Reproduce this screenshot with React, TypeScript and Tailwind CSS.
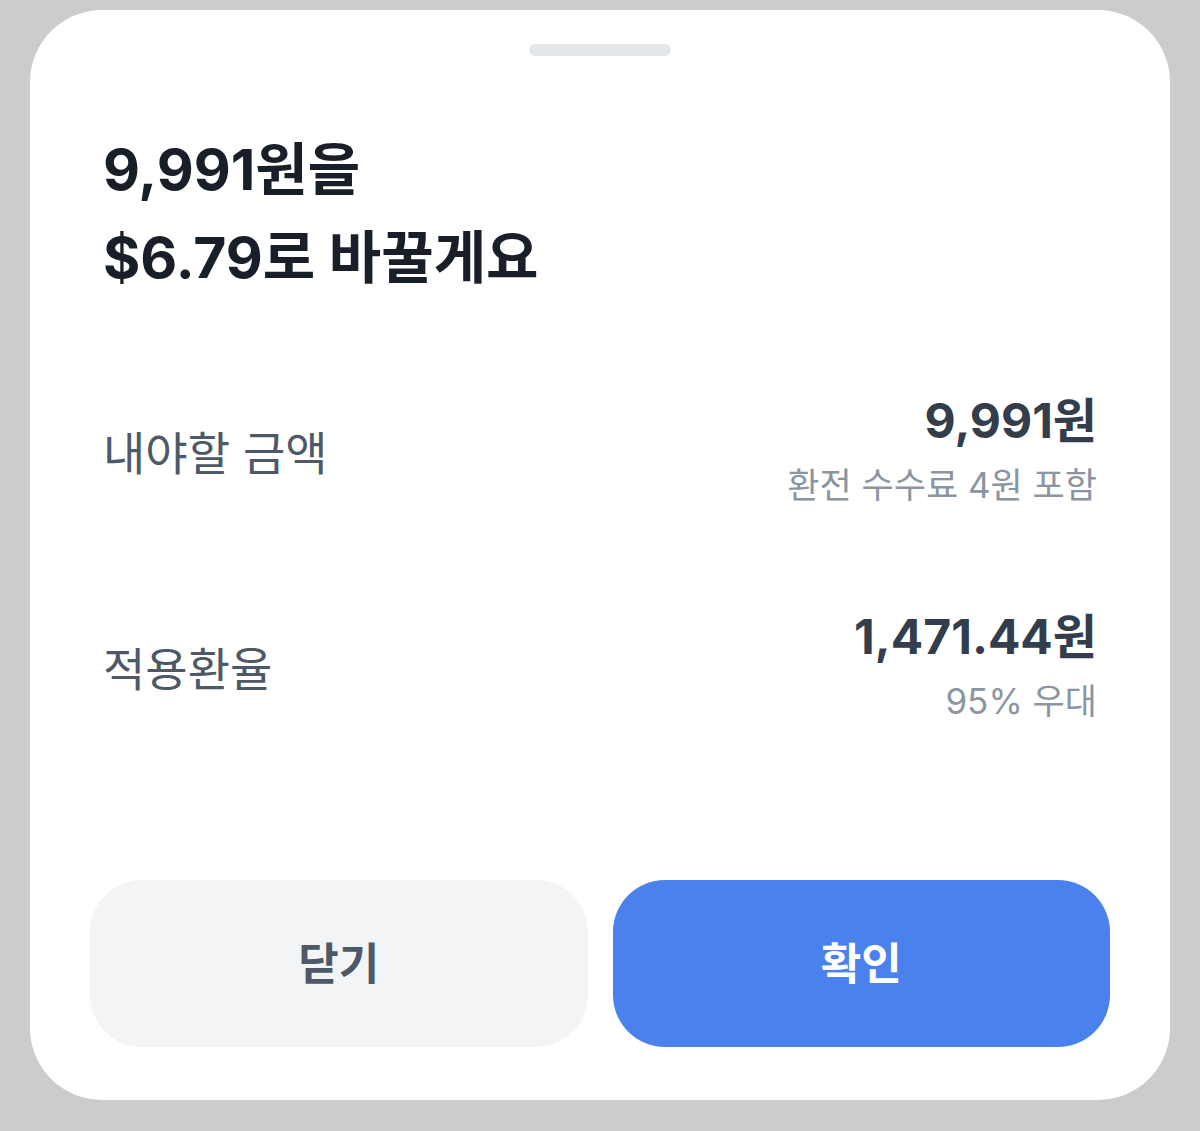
export default function App() {
  const font = { fontFamily: '"Inter", "Noto Sans CJK KR", sans-serif' };

  return (
    <div className="w-full h-[1131px] bg-[#cccccc] pt-[10px] px-[30px]" style={font}>
      <div className="bg-white rounded-[72px] h-[1090px] flex flex-col">
        <div className="mt-[34px] mx-auto w-[142px] h-[12px] rounded-full bg-[#e5e8eb]" />

        <h1 className="mt-[70px] pl-[73px] text-[57px] leading-[88px] font-bold text-[#191f28]">
          9,991원을
          <br />
          $6.79로 바꿀게요
        </h1>

        <div className="mt-[87px] px-[73px] flex flex-col gap-[88px]">
          <div className="flex items-center justify-between">
            <span className="text-[46px] text-[#4e5968]">내야할 금액</span>
            <div className="flex flex-col items-end">
              <span className="text-[48px] leading-[64px] font-bold text-[#333d4b]">9,991원</span>
              <span className="text-[35px] leading-[64px] text-[#8b95a1]">환전 수수료 4원 포함</span>
            </div>
          </div>
          <div className="flex items-center justify-between">
            <span className="text-[46px] text-[#4e5968]">적용환율</span>
            <div className="flex flex-col items-end">
              <span className="text-[48px] leading-[64px] font-bold text-[#333d4b]">1,471.44원</span>
              <span className="text-[35px] leading-[64px] text-[#8b95a1]">95% 우대</span>
            </div>
          </div>
        </div>

        <div className="flex-1" />

        <div className="px-[60px] mb-[53px] flex gap-[25px]">
          <button className="flex-1 h-[167px] rounded-[52px] bg-[#f2f4f6] text-[44px] font-semibold text-[#4e5968]">
            닫기
          </button>
          <button className="flex-1 h-[167px] rounded-[52px] bg-[#4a81ec] text-[44px] font-semibold text-white">
            확인
          </button>
        </div>
      </div>
    </div>
  );
}
